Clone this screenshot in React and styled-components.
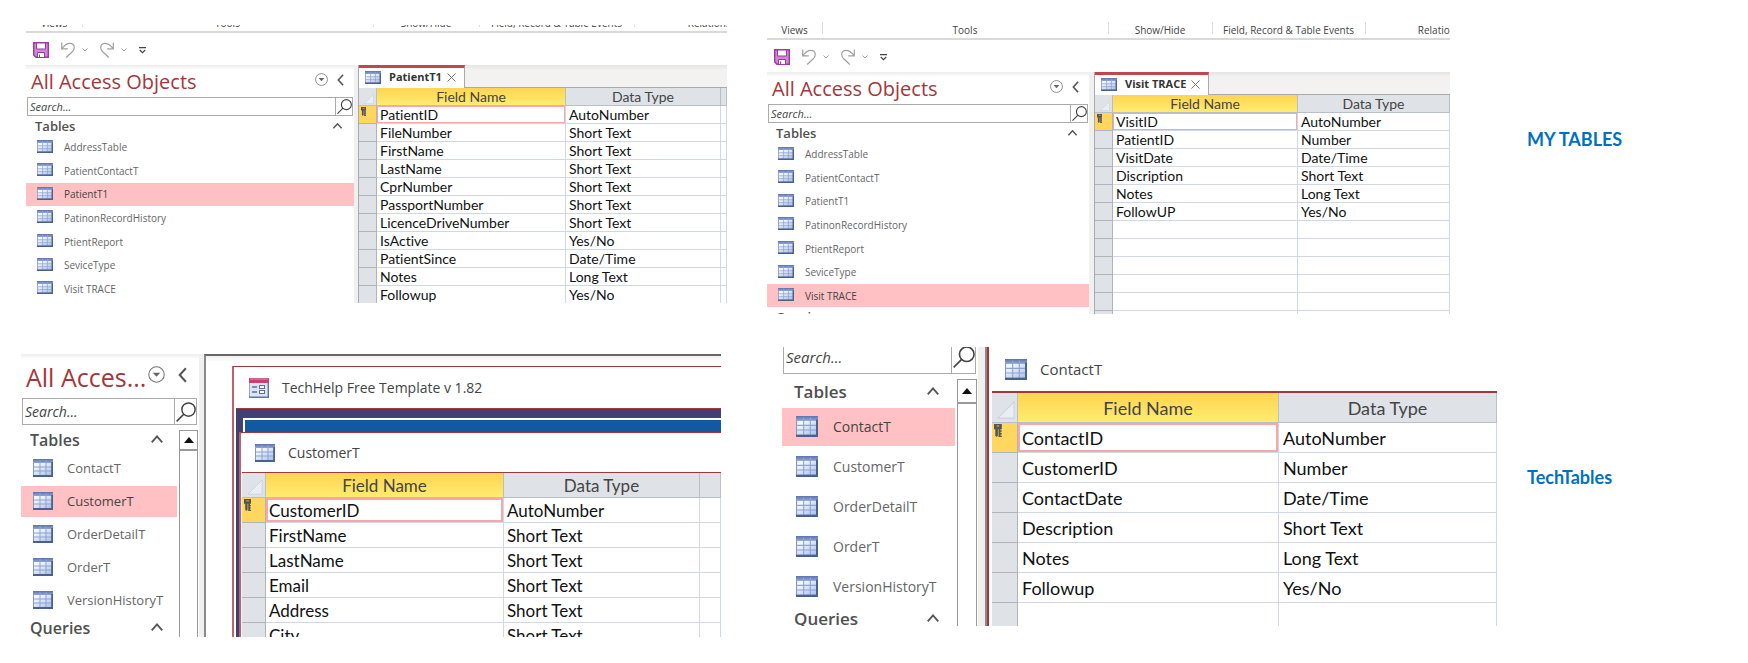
// Access tables comparison page
import React, { useState } from "react";
import styled, { createGlobalStyle, css, ThemeProvider } from "styled-components";

const GlobalStyle = createGlobalStyle`
  *, *::before, *::after {
    box-sizing: border-box;
  }

  body {
    margin: 0;
    background-color: #fff;
    font-family: "Open Sans", "Noto Sans", sans-serif;
    color: #444;
  }

  button {
    padding: 0;
    border: 0;
    background: none;
    font: inherit;
    color: inherit;
    text-align: left;
  }
`;

const small = {
  titleFont: 20,
  titleHeight: 32,
  titleRight: 10,
  titleGap: 9,
  searchFont: 11,
  searchHeight: 19,
  searchButton: 17,
  headingFont: 13,
  headingHeight: 20,
  headingTop: 0,
  headingBottom: 0,
  headingLeft: 9,
  headingRight: 11,
  itemFont: 10,
  listHeight: 164,
  itemGap: 1,
  itemLeft: 11,
  itemIconGap: 11,
  iconWidth: 16,
  iconHeight: 13,
  navRight: 1,
  headHeight: 18,
  rowHeight: 18,
  cellFont: 14,
  cellTop: 1,
  cellLeft: 3,
  selector: 18,
  outline: 1,
};

const medium = {
  titleFont: 25,
  titleHeight: 44,
  titleRight: 12,
  titleGap: 13,
  searchFont: 14,
  searchHeight: 27,
  searchButton: 22,
  headingFont: 16,
  headingHeight: 25,
  headingTop: 3,
  headingBottom: 2,
  headingLeft: 9,
  headingRight: 13,
  itemFont: 13,
  listHeight: 163,
  itemGap: 2,
  itemLeft: 12,
  itemIconGap: 14,
  iconWidth: 20,
  iconHeight: 18,
  navRight: 2,
  headHeight: 25,
  rowHeight: 25,
  cellFont: 17,
  cellTop: 0,
  cellLeft: 3,
  selector: 24,
  windowTitleFont: 14,
  windowTitleHeight: 39,
  outline: 2,
};

const large = {
  ...medium,
  searchFont: 15,
  searchHeight: 34,
  searchButton: 24,
  headingFont: 17,
  headingHeight: 29,
  headingTop: 5,
  headingBottom: 4,
  headingLeft: 12,
  headingRight: 15,
  listHeight: 198,
  itemFont: 14,
  itemLeft: 14,
  itemIconGap: 15,
  iconWidth: 22,
  iconHeight: 21,
  headHeight: 30,
  rowHeight: 30,
  cellFont: 18,
  cellLeft: 4,
  selector: 26,
  windowTitleFont: 15,
  windowTitleHeight: 44,
};

/* Page */
const Page = styled.main`
  display: flex;
  flex-direction: column;
  gap: 33px;
  padding: 22px 0 26px;
`;

const Row = styled.section`
  display: flex;
  align-items: flex-start;
  padding-left: ${(props) => props.$left}px;
`;

const Panel = styled.article`
  display: flex;
  flex-direction: column;
  flex: ${(props) => props.$grow} 1 0;
  min-width: 0;
  max-height: ${(props) => props.$max}px;
  margin: ${(props) => props.$top || 0}px ${(props) => props.$gap}px 0 0;
  overflow: hidden;
`;

const Caption = styled.h2`
  flex: 221 1 0;
  margin: ${(props) => props.$top}px 0 0;
  font: 700 18px/24px Lato, "Open Sans", sans-serif;
  color: #0070c0;
`;

const Body = styled.div`
  display: flex;
  flex: 1 1 auto;
  min-height: 0;
`;

/* Ribbon and quick access toolbar */
const Ribbon = styled.div`
  display: flex;
  align-items: flex-end;
  flex: none;
  height: ${(props) => props.$height}px;
  border-bottom: 2px solid #d9d9d9;
  overflow: hidden;
`;

const RibbonGroup = styled.div`
  display: flex;
  justify-content: center;
  align-items: flex-end;
  flex: none;
  width: ${(props) => props.$width}px;
  height: 16px;
  padding-bottom: 1px;
  font-size: 10px;
  line-height: 14px;
  white-space: nowrap;

  & + & {
    background: linear-gradient(#dcdcdc, #dcdcdc) left top / 1px 12px no-repeat;
  }
`;

const QuickBar = styled.div`
  display: flex;
  align-items: center;
  gap: 12px;
  flex: none;
  height: 32px;
  padding: 2px 0 0 7px;

  button {
    display: flex;
    align-items: center;
    gap: 7px;
  }
`;

/* Navigation pane */
const Nav = styled.nav`
  flex: none;
  width: ${(props) => props.$width}px;
  margin-top: ${(props) => props.$offset || 0}px;
  background: linear-gradient(#ececec, #fff 5px);
`;

const Splitter = styled.div`
  flex: none;
  width: ${(props) => props.$width}px;
  background-color: #f0f0f0;
`;

const NavHeader = styled.header`
  display: flex;
  align-items: center;
  height: ${({ theme }) => theme.titleHeight}px;
  padding: 0 ${({ theme }) => theme.titleRight}px 0 5px;

  h1 {
    flex: 1;
    min-width: 0;
    margin: 0;
    padding-top: 2px;
    font-size: ${({ theme }) => theme.titleFont}px;
    font-weight: 400;
    line-height: ${({ theme }) => theme.titleHeight - 4}px;
    color: #a4373a;
    white-space: nowrap;
  }

  button {
    display: flex;
    padding-bottom: 3px;
  }

  button + button {
    margin-left: ${({ theme }) => theme.titleGap}px;
  }
`;

const SearchBox = styled.div`
  display: flex;
  height: ${({ theme }) => theme.searchHeight}px;
  margin: 0 ${({ theme }) => theme.navRight}px 0 1px;
  border: 1px solid #ababab;
  background-color: #fff;

  input {
    flex: 1;
    min-width: 0;
    padding: 0 2px;
    border: 0;
    outline: 0;
    background: none;
    font: italic ${({ theme }) => theme.searchFont}px "Open Sans", sans-serif;
    color: #444;
  }

  input::placeholder {
    color: #444;
    opacity: 1;
  }

  button {
    display: flex;
    justify-content: center;
    align-items: center;
    width: ${({ theme }) => theme.searchButton}px;
    border-left: 1px solid #ababab;
  }
`;

const NavContent = styled.div`
  display: flex;
`;

const NavGroups = styled.div`
  flex: 1;
  min-width: 0;
`;

const GroupHeading = styled.button`
  display: flex;
  justify-content: space-between;
  align-items: center;
  width: 100%;
  height: ${({ theme }) => theme.headingHeight}px;
  padding: 0 ${({ theme }) => theme.headingRight}px ${({ theme }) => theme.headingBottom}px
    ${({ theme }) => theme.headingLeft}px;
  font-size: ${({ theme }) => theme.headingFont}px;
  font-weight: 600;
  line-height: 1;
  color: #505050;

  &:first-child {
    margin-top: ${({ theme }) => theme.headingTop}px;
  }
`;

const List = styled.ul`
  display: grid;
  grid-auto-rows: 1fr;
  gap: ${({ theme }) => theme.itemGap}px;
  height: ${({ theme }) => theme.listHeight}px;
  margin: 0;
  padding: 0;
  list-style: none;
`;

const Item = styled.button`
  display: flex;
  align-items: center;
  gap: ${({ theme }) => theme.itemIconGap}px;
  width: 100%;
  height: 100%;
  padding-left: ${({ theme }) => theme.itemLeft}px;
  font-size: ${({ theme }) => theme.itemFont}px;
  line-height: 1;
  color: #666;
  white-space: nowrap;

  svg {
    margin-bottom: 2px;
  }

  ${(props) =>
    props.$active &&
    css`
      background-color: #ffc1c3;
      color: #444;
    `}
`;

const Scrollbar = styled.div`
  flex: none;
  width: ${(props) => props.$width}px;
  margin: 5px 1px 0 2px;
  border: 1px solid #999;

  button {
    display: flex;
    justify-content: center;
    align-items: center;
    width: 100%;
    height: ${(props) => props.$button}px;
    border-bottom: 2px solid #999;
  }
`;

/* Documents */
const Doc = styled.div`
  flex: 1;
  min-width: 0;
  border-left: 1px solid #a6a9ad;
`;

const TabBar = styled.div`
  display: flex;
  height: 23px;
  background: linear-gradient(#e4e4e4, #f3f2f1 5px);
  box-shadow: inset 0 -1px #a6a9ad;
`;

const Tab = styled.div`
  display: flex;
  align-items: center;
  width: ${(props) => props.$width}px;
  padding: 0 8px 2px 6px;
  border-top: 3px solid #c0484c;
  border-right: 1px solid #a6a9ad;
  background-color: #fff;
  font-size: 11px;
  font-weight: 700;
  line-height: 14px;
  color: #333;
  white-space: nowrap;

  span {
    flex: 1;
    padding-left: 8px;
  }

  button {
    display: flex;
  }
`;

const Grid = styled.table`
  width: 100%;
  table-layout: fixed;
  border-collapse: separate;
  border-spacing: 0;
  font-family: Lato, "Open Sans", sans-serif;
  font-size: ${({ theme }) => theme.cellFont}px;
  font-variant-ligatures: none;
  line-height: 1;
  color: #111;
  white-space: nowrap;

  tr {
    height: ${({ theme }) => theme.rowHeight}px;
  }

  thead tr {
    height: ${({ theme }) => theme.headHeight}px;
  }

  th,
  td {
    padding: ${({ theme }) => theme.cellTop}px 0 0;
    border-right: 1px solid #d0d7e5;
    border-bottom: 1px solid #d0d7e5;
    overflow: hidden;
  }

  td {
    padding-left: ${({ theme }) => theme.cellLeft}px;
  }

  thead th {
    background-color: #dfe3e8;
    border-color: #b9bfc9;
    font-weight: 400;
    color: #444;
  }

  thead th:nth-child(2) {
    background: linear-gradient(#ffd452, #ffec70);
  }

  th svg {
    display: block;
  }

  thead th svg {
    margin: 4px 2px 0 auto;
  }
`;

const Selector = styled.th`
  background-color: ${(props) => (props.$active ? "#ffd75e" : "#dfe3e8")};

  && {
    padding: 1px 0 0 2px;
    border-color: #b0b4ba;
    vertical-align: top;
  }
`;

const FieldCell = styled.td`
  ${(props) =>
    props.$active &&
    css`
      box-shadow: inset 0 0 0 ${({ theme }) => theme.outline}px #f9a5a9;
    `}
`;

const WindowTitle = styled.div`
  display: flex;
  align-items: center;
  gap: 13px;
  height: ${(props) => props.$height || props.theme.windowTitleHeight}px;
  padding-left: 13px;
  font-size: ${({ theme }) => theme.windowTitleFont}px;
  color: #444;
`;

const Desktop = styled.div`
  flex: 1;
  min-width: 0;
  padding: 10px 0 0 26px;
  border-left: 2px solid #8a8a8a;
  border-top: 2px solid #666;
  background: linear-gradient(#f0f0f0, #fff 6px);
`;

const FormWindow = styled.div`
  padding-left: 2px;
  border-left: 2px solid #bd6468;
  border-top: 1px solid #a4373a;
  background-color: #fff;
`;

const FormBody = styled.div`
  padding-top: 9px;
  border-top: 1px solid #a4373a;
  background-color: #42406f;
`;

const FormBand = styled.div`
  height: 14px;
  margin-left: 7px;
  border: solid #fff;
  border-width: 2px 0 0 2px;
  background-color: #1359a2;
`;

const TableWindow = styled.div`
  margin-left: 3px;
  padding-left: 1px;
  border-left: 2px solid #bd6468;
  border-top: 1px solid #a4373a;
  background-color: #fff;

  table {
    border-top: 1px solid #a4373a;
  }
`;

const Maximized = styled.div`
  flex: 1;
  min-width: 0;
  padding-left: 5px;
  border-left: 2px solid #8a8a8a;
  box-shadow: inset 2px 0 #a4373a;

  table {
    border-top: 2px solid #a4373a;
  }
`;

/* Icons */
const TableIcon = ({ width, height }) => (
  <svg width={width} height={height} viewBox="0 0 20 18" preserveAspectRatio="none" aria-hidden="true">
    <defs>
      <linearGradient id="tableBody" x1="0" y1="0" x2="1" y2="1">
        <stop offset="0.2" stopColor="#f4f7fd" />
        <stop offset="1" stopColor="#a9bfe8" />
      </linearGradient>
      <linearGradient id="tableHead" x1="0" y1="0" x2="0" y2="1">
        <stop offset="0" stopColor="#5a73ae" />
        <stop offset="1" stopColor="#8fa6d6" />
      </linearGradient>
    </defs>
    <rect width="20" height="18" fill="#8398c2" />
    <rect x="1" y="4" width="18" height="12" fill="url(#tableBody)" />
    <rect width="20" height="4" fill="url(#tableHead)" />
    <path d="M1 8h18M1 12h18M7 1v15M13 1v15" stroke="#8ea3cf" strokeWidth="1" />
    <path d="M0 17h20M19.2 3v15" stroke="#4a618c" strokeWidth="2" />
  </svg>
);

const FormIcon = () => (
  <svg width="20" height="20" viewBox="0 0 20 20" aria-hidden="true">
    <rect x="0.5" y="0.5" width="19" height="19" fill="#dce5f5" stroke="#98a8c4" />
    <rect width="20" height="5" fill="#c93f6e" />
    <path d="M1 1h18" stroke="#e58ba8" />
    <path d="M3 9h5M3 14h5" stroke="#5c6f94" strokeWidth="1.5" />
    <rect x="10.5" y="7.5" width="5" height="3" fill="#fff" stroke="#5c6f94" />
    <rect x="10.5" y="12.5" width="5" height="3" fill="#fff" stroke="#5c6f94" />
    <path d="M0 19.3h20M19.3 5v15" stroke="#61779f" strokeWidth="1.4" />
  </svg>
);

const SaveIcon = () => (
  <svg width="16" height="16" viewBox="0 0 16 16" aria-hidden="true">
    <path d="M0.7 0.7h14.6v14.6H3l-2.3-2.3z" fill="#cf87d3" stroke="#9b3aa5" strokeWidth="1.4" />
    <path d="M3.5 1h9v6h-9z" fill="#fff" stroke="#9b3aa5" />
    <path d="M4.5 15v-4.5h7V15" fill="#fff" stroke="#9b3aa5" />
    <path d="M6.5 12.5v2.5" stroke="#9b3aa5" />
  </svg>
);

const UndoIcon = ({ redo }) => (
  <svg width="14" height="16" viewBox="0 0 14 16" fill="none" stroke="#a0a0a0" strokeWidth="1.2" aria-hidden="true">
    <path
      d={
        redo
          ? "M13.3 0.5v6.3H7.2M13 6.5C10 2.5 7.5 1.3 5 1.3 2.5 1.3 0.7 3.2 0.7 5.5c0 2 1 3.3 2.3 4.5l5.8 5.5"
          : "M0.7 0.5v6.3h6.1M1 6.5C4 2.5 6.500 1.3 9 1.3c2.5 0 4.3 1.9 4.3 4.2 0 2-1 3.3-2.3 4.5l-5.8 5.5"
      }
    />
  </svg>
);

const SmallChevron = () => (
  <svg width="6" height="4" viewBox="0 0 6 4" fill="none" stroke="#a0a0a0" aria-hidden="true">
    <path d="M0.5 0.5 3 3l2.5-2.5" />
  </svg>
);

const CustomizeIcon = () => (
  <svg width="7" height="7" viewBox="0 0 7 7" fill="none" stroke="#444" strokeWidth="1.2" aria-hidden="true">
    <path d="M0 0.6h7M0.8 3l2.7 2.7L6.2 3" />
  </svg>
);

const DropIcon = ({ size }) => (
  <svg width={size} height={size} viewBox="0 0 16 16" aria-hidden="true">
    <circle cx="8" cy="8" r="7.3" fill="none" stroke="#777" />
    <path d="M4.5 6.3h7L8 10.2z" fill="#666" />
  </svg>
);

const CollapseIcon = ({ size }) => (
  <svg width={size / 2} height={size} viewBox="0 0 8 16" fill="none" stroke="#555" strokeWidth="1.8" aria-hidden="true">
    <path d="M7 2 1.5 8 7 14" />
  </svg>
);

const UpChevron = ({ size }) => (
  <svg width={size} height={size} viewBox="0 0 12 12" fill="none" stroke="#555" strokeWidth="1.6" aria-hidden="true">
    <path d="M1.5 8 6 3l4.5 5" />
  </svg>
);

const SearchIcon = ({ size }) => (
  <svg width={size} height={size} viewBox="0 0 16 16" fill="none" stroke="#444" strokeWidth="1.2" aria-hidden="true">
    <circle cx="10" cy="6" r="5.3" />
    <path d="M6.3 9.7.5 15.5" />
  </svg>
);

const CloseIcon = () => (
  <svg width="9" height="9" viewBox="0 0 9 9" stroke="#777" strokeWidth="1" aria-hidden="true">
    <path d="m0.5.5 8 8M8.5.5l-8 8" />
  </svg>
);

const KeyIcon = ({ height }) => (
  <svg width={height * 0.6} height={height} viewBox="0 0 6 10" fill="#555" aria-hidden="true">
    <path d="M0 0h6v4H5v1h1v1H5v1h1v1H5v1h1v1H3.5V4H3v5L2 10 1 9V4H0z" />
    <path d="M2 1h2v1H2z" fill="#c9a94c" />
  </svg>
);

const CornerIcon = ({ size }) => (
  <svg width={size} height={size} viewBox="0 0 10 10" aria-hidden="true">
    <path d="M9.5.5v9H.5z" fill="#e9edf4" stroke="#cdd3df" strokeWidth="0.6" />
  </svg>
);

const ScrollArrow = () => (
  <svg width="10" height="6" viewBox="0 0 10 6" aria-hidden="true">
    <path d="M5 0l5 6H0z" fill="#111" />
  </svg>
);

/* Data */
const patientObjects = [
  "AddressTable",
  "PatientContactT",
  "PatientT1",
  "PatinonRecordHistory",
  "PtientReport",
  "SeviceType",
  "Visit TRACE",
];

const templateObjects = ["ContactT", "CustomerT", "OrderDetailT", "OrderT", "VersionHistoryT"];

const patientFields = [
  ["PatientID", "AutoNumber"],
  ["FileNumber", "Short Text"],
  ["FirstName", "Short Text"],
  ["LastName", "Short Text"],
  ["CprNumber", "Short Text"],
  ["PassportNumber", "Short Text"],
  ["LicenceDriveNumber", "Short Text"],
  ["IsActive", "Yes/No"],
  ["PatientSince", "Date/Time"],
  ["Notes", "Long Text"],
  ["Followup", "Yes/No"],
];

const visitFields = [
  ["VisitID", "AutoNumber"],
  ["PatientID", "Number"],
  ["VisitDate", "Date/Time"],
  ["Discription", "Short Text"],
  ["Notes", "Long Text"],
  ["FollowUP", "Yes/No"],
];

const customerFields = [
  ["CustomerID", "AutoNumber"],
  ["FirstName", "Short Text"],
  ["LastName", "Short Text"],
  ["Email", "Short Text"],
  ["Address", "Short Text"],
  ["City", "Short Text"],
];

const contactFields = [
  ["ContactID", "AutoNumber"],
  ["CustomerID", "Number"],
  ["ContactDate", "Date/Time"],
  ["Description", "Short Text"],
  ["Notes", "Long Text"],
  ["Followup", "Yes/No"],
];

/* Components */
const Toolbars = ({ height, widths }) => {
  const labels = ["Views", "Tools", "Show/Hide", "Field, Record & Table Events", "Relationships"];

  return (
    <>
      <Ribbon $height={height}>
        {labels.map((label, i) => (
          <RibbonGroup key={label} $width={widths[i]}>
            {label}
          </RibbonGroup>
        ))}
      </Ribbon>
      <QuickBar>
        <button aria-label="Save">
          <SaveIcon />
        </button>
        <button aria-label="Undo">
          <UndoIcon />
          <SmallChevron />
        </button>
        <button aria-label="Redo">
          <UndoIcon redo />
          <SmallChevron />
        </button>
        <button aria-label="Customize toolbar">
          <CustomizeIcon />
        </button>
      </QuickBar>
    </>
  );
};

const NavPane = ({ width, offset, title, objects, initial, queries, scroll, theme }) => {
  const [active, setActive] = useState(initial);
  const big = theme !== small;
  const round = big ? 17 : 13;
  const chevron = big ? 14 : 11;

  return (
    <Nav $width={width} $offset={offset}>
      {title && (
        <NavHeader>
          <h1>{title}</h1>
          <button aria-label="Choose category">
            <DropIcon size={round} />
          </button>
          <button aria-label="Collapse pane">
            <CollapseIcon size={big ? 18 : 14} />
          </button>
        </NavHeader>
      )}
      <SearchBox>
        <input type="text" placeholder="Search..." aria-label="Search objects" />
        <button aria-label="Search">
          <SearchIcon size={theme.searchButton - 2} />
        </button>
      </SearchBox>
      <NavContent>
        <NavGroups>
          <GroupHeading>
            Tables
            <UpChevron size={chevron} />
          </GroupHeading>
          <List>
            {objects.map((name) => (
              <li key={name}>
                <Item $active={name === active} onClick={() => setActive(name)}>
                  <TableIcon width={theme.iconWidth} height={theme.iconHeight} />
                  {name}
                </Item>
              </li>
            ))}
          </List>
          {queries && (
            <GroupHeading>
              Queries
              <UpChevron size={chevron} />
            </GroupHeading>
          )}
        </NavGroups>
        {scroll && (
          <Scrollbar $width={scroll.width} $button={scroll.button}>
            <button aria-label="Scroll up">
              <ScrollArrow />
            </button>
          </Scrollbar>
        )}
      </NavContent>
    </Nav>
  );
};

const FieldGrid = ({ fields, blank = 0, fieldWidth, extra, theme }) => {
  const rows = [...fields, ...Array.from({ length: blank }, () => ["", ""])];

  return (
    <Grid>
      <colgroup>
        <col width={theme.selector} />
        <col width={fieldWidth} />
        <col />
        {extra && <col width={extra} />}
      </colgroup>
      <thead>
        <tr>
          <th aria-label="Select all">
            <CornerIcon size={theme.selector - 8} />
          </th>
          <th>Field Name</th>
          <th>Data Type</th>
          {extra && <th aria-label="Description" />}
        </tr>
      </thead>
      <tbody>
        {rows.map(([field, type], i) => (
          <tr key={i}>
            <Selector $active={i === 0}>{i === 0 && <KeyIcon height={theme.selector / 2} />}</Selector>
            <FieldCell $active={i === 0}>{field}</FieldCell>
            <td>{type}</td>
            {extra && <td />}
          </tr>
        ))}
      </tbody>
    </Grid>
  );
};

const DocTab = ({ name, width }) => (
  <TabBar>
    <Tab $width={width}>
      <TableIcon width={16} height={13} />
      <span>{name}</span>
      <button aria-label={`Close ${name}`}>
        <CloseIcon />
      </button>
    </Tab>
  </TabBar>
);

const App = () => {
  return (
    <Page>
      <GlobalStyle />
      <Row $left={26}>
        <ThemeProvider theme={small}>
          <Panel $grow={701} $gap={40} $top={3} $max={278}>
            <Toolbars height={8} widths={[56, 291, 106, 155, 170]} />
            <Body>
              <NavPane width={328} title="All Access Objects" objects={patientObjects} initial="PatientT1" theme={small} />
              <Splitter $width={4} />
              <Doc>
                <DocTab name="PatientT1" width={106} />
                <FieldGrid fields={patientFields} fieldWidth={189} extra={6} theme={small} />
              </Doc>
            </Body>
          </Panel>
          <Panel $grow={683} $gap={77} $max={292}>
            <Toolbars height={18} widths={[55, 286, 104, 153, 168]} />
            <Body>
              <NavPane
                width={322}
                title="All Access Objects"
                objects={patientObjects}
                initial="Visit TRACE"
                queries
                theme={small}
              />
              <Splitter $width={5} />
              <Doc>
                <DocTab name="Visit TRACE" width={114} />
                <FieldGrid fields={visitFields} blank={6} fieldWidth={185} theme={small} />
              </Doc>
            </Body>
          </Panel>
        </ThemeProvider>
        <Caption $top={105}>MY TABLES</Caption>
      </Row>
      <Row $left={21}>
        <ThemeProvider theme={medium}>
          <Panel $grow={700} $gap={61} $top={7} $max={283}>
            <Body>
              <NavPane
                width={178}
                title="All Acces..."
                objects={templateObjects}
                initial="CustomerT"
                queries
                scroll={{ width: 19, button: 20 }}
                theme={medium}
              />
              <Splitter $width={5} />
              <Desktop>
                <FormWindow>
                  <WindowTitle $height={41}>
                    <FormIcon />
                    TechHelp Free Template v 1.82
                  </WindowTitle>
                  <FormBody>
                    <FormBand />
                    <TableWindow>
                      <WindowTitle>
                        <TableIcon width={20} height={18} />
                        CustomerT
                      </WindowTitle>
                      <FieldGrid fields={customerFields} fieldWidth={238} extra={21} theme={medium} />
                    </TableWindow>
                  </FormBody>
                </FormWindow>
              </Desktop>
            </Body>
          </Panel>
        </ThemeProvider>
        <ThemeProvider theme={large}>
          <Panel $grow={715} $gap={30} $max={279}>
            <Body>
              <NavPane
                width={196}
                offset={-7}
                objects={templateObjects}
                initial="ContactT"
                queries
                scroll={{ width: 20, button: 24 }}
                theme={large}
              />
              <Splitter $width={7} />
              <Maximized>
                <WindowTitle>
                  <TableIcon width={22} height={21} />
                  ContactT
                </WindowTitle>
                <FieldGrid fields={contactFields} blank={1} fieldWidth={261} theme={large} />
              </Maximized>
            </Body>
          </Panel>
        </ThemeProvider>
        <Caption $top={118}>TechTables</Caption>
      </Row>
    </Page>
  );
};

export default App;
